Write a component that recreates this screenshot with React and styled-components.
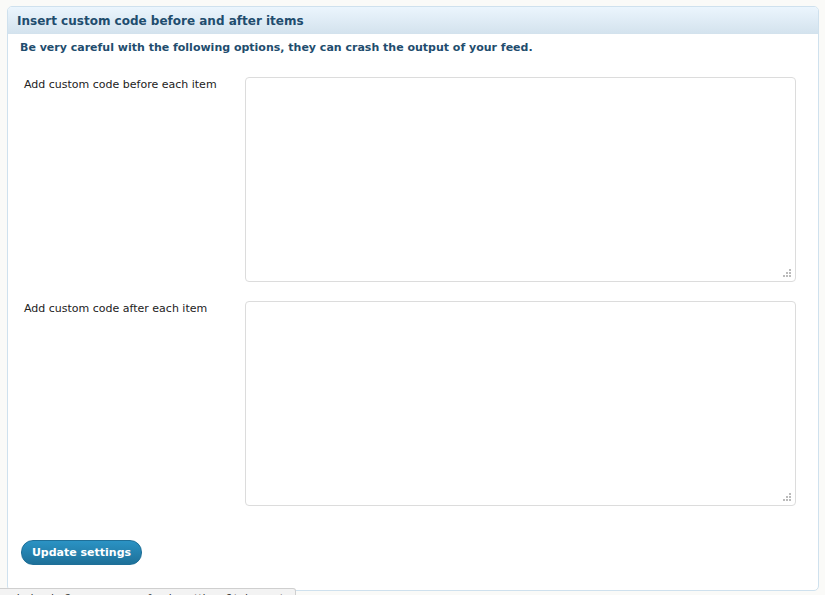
import React from 'react';
import styled, { createGlobalStyle } from 'styled-components';

const Global = createGlobalStyle`
html, body {
    margin: 0;
    padding: 0;
    background: #fafaf8;
    font-family: "DejaVu Sans", Verdana, sans-serif;
    overflow: hidden;
}
`

const Page = styled.div`
width: 825px;
height: 595px;
padding: 6px 7px 0 7px;
box-sizing: border-box;
position: relative;
`
const Panel = styled.div`
width: 812px;
height: 585px;
box-sizing: border-box;
border: 1px solid #cfe1ee;
border-radius: 5px;
background: #fff;
display: flex;
flex-direction: column;
overflow: hidden;
`
const Header = styled.h3`
margin: 0;
height: 27px;
box-sizing: border-box;
display: flex;
align-items: center;
padding: 2px 9px 0 9px;
font-size: 12px;
font-weight: bold;
color: #1f4d6e;
background: linear-gradient(to bottom, #ebf5fd, #d4e3ee);
border-bottom: 1px solid #d3e2ed;
`
const Body = styled.div`
padding: 7px 12px 0 12px;
display: flex;
flex-direction: column;
`
const Warning = styled.p`
margin: 0;
font-size: 11px;
font-weight: bold;
color: #1f4d6e;
`
const Row = styled.div`
display: flex;
margin-top: ${props => props.first ? '23px' : '19px'};
`
const Label = styled.label`
width: 221px;
padding: 1px 0 0 4px;
font-size: 11px;
color: #222;
line-height: 14px;
`
const Field = styled.div`
position: relative;
width: 551px;
height: 205px;
`
const Area = styled.textarea`
display: block;
width: 100%;
height: 100%;
box-sizing: border-box;
margin: 0;
border: 1px solid #dcdcdc;
border-radius: 4px;
resize: none;
outline: none;
font-family: "DejaVu Sans Mono", monospace;
font-size: 11px;
`
const Grip = styled.svg`
position: absolute;
right: 5px;
bottom: 5px;
`
const Button = styled.button`
margin-top: 34px;
align-self: flex-start;
margin-left: 1px;
width: 121px;
height: 25px;
border: 1px solid #1f6f98;
border-radius: 12px;
background: linear-gradient(to bottom, #2b93c4, #1e7099);
color: #fff;
font-family: "DejaVu Sans", Verdana, sans-serif;
font-size: 11px;
font-weight: bold;
cursor: pointer;
`
const Status = styled.div`
position: absolute;
left: 0;
top: 588px;
width: 296px;
height: 20px;
box-sizing: border-box;
background: #f3f3f3;
border: 1px solid #cfcfcf;
border-left: none;
border-radius: 0 3px 0 0;
padding: 3px 6px;
font-size: 11px;
color: #333;
white-space: nowrap;
overflow: hidden;
`

const ResizeDots = () => (
    <Grip width="8" height="8" viewBox="0 0 8 8">
        <rect x="6" y="0" width="2" height="2" fill="#bbb" />
        <rect x="3" y="3" width="2" height="2" fill="#bbb" />
        <rect x="6" y="3" width="2" height="2" fill="#bbb" />
        <rect x="0" y="6" width="2" height="2" fill="#bbb" />
        <rect x="3" y="6" width="2" height="2" fill="#bbb" />
        <rect x="6" y="6" width="2" height="2" fill="#bbb" />
    </Grip>
)

const CodeRow = ({ label, first }) => (
    <Row first={first}>
        <Label>{label}</Label>
        <Field>
            <Area />
            <ResizeDots />
        </Field>
    </Row>
)

const App = () => {
    return (
        <Page>
            <Global />
            <Panel>
                <Header>Insert custom code before and after items</Header>
                <Body>
                    <Warning>Be very careful with the following options, they can crash the output of your feed.</Warning>
                    <CodeRow first label='Add custom code before each item' />
                    <CodeRow label='Add custom code after each item' />
                    <Button>Update settings</Button>
                </Body>
            </Panel>
            <Status>admin.php?page=wp-rss-feeds-settings&tab=custom</Status>
        </Page>
    )
}

export default App;
